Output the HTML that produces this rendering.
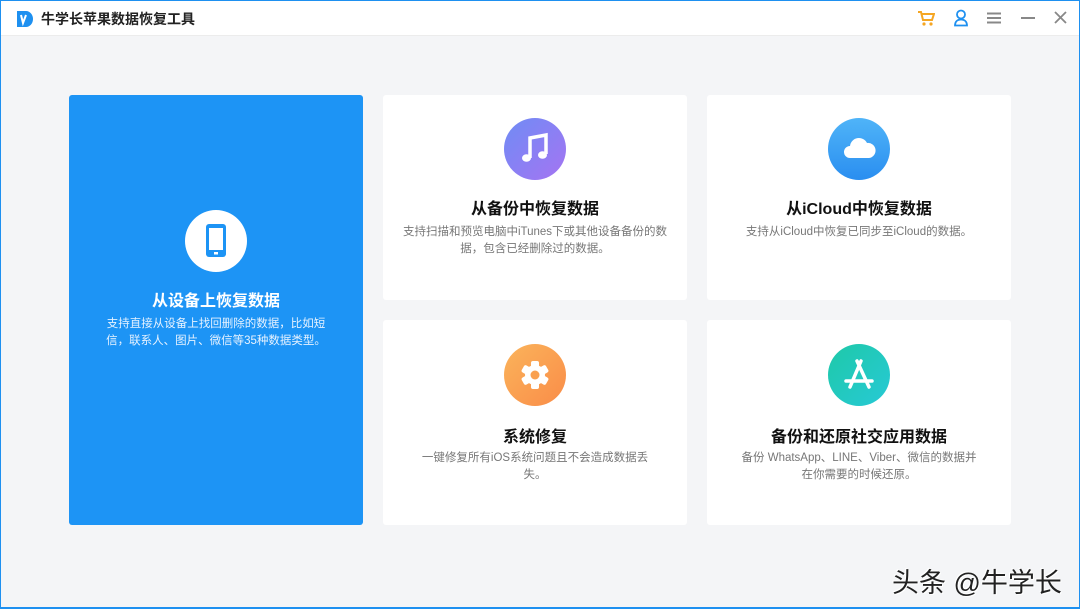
<!DOCTYPE html>
<html><head><meta charset="utf-8"><style>
*{margin:0;padding:0;box-sizing:border-box}
body{width:1080px;height:609px;overflow:hidden;font-family:"Liberation Sans","Noto Sans CJK SC",sans-serif;background:#f4f5f7;position:relative}
.frame{position:absolute;left:0;top:0;width:1080px;height:609px;border:1px solid #1e90f0;border-bottom-width:2px;pointer-events:none}
.top{position:absolute;left:0;top:0;width:1080px;height:36px;background:#fff;border-bottom:1px solid #ececec}
.title{position:absolute;left:41px;top:9px;font-size:14px;font-weight:bold;color:#222}
.card{position:absolute;background:#fff;border-radius:3px;text-align:center}
.circ{position:absolute;width:62px;height:62px;border-radius:50%;left:50%;margin-left:-31px}
.h{position:absolute;left:0;right:0;font-size:16px;font-weight:bold;color:#111}
.d{position:absolute;left:0;right:0;font-size:11.5px;color:#777;line-height:16.5px;padding:0 13px}
.blue{background:#1d94f5}
.blue .h{color:#fff}.blue .d{color:#e6f2ff}
</style></head><body>
<div class="top">
<svg style="position:absolute;left:16px;top:10px" width="17" height="18" viewBox="0 0 17 18"><path d="M1 1h9a7 8 0 0 1 0 16H1z" fill="#1e90f0"/><path d="M5 5l2 8 3-8" stroke="#fff" stroke-width="2" fill="none"/></svg>
<div class="title">牛学长苹果数据恢复工具</div>
<svg style="position:absolute;left:917px;top:10px" width="18" height="17" viewBox="0 0 18 17"><path d="M1 2h3l2 8h9l2-6H5" stroke="#f5a623" stroke-width="2" fill="none"/><circle cx="7" cy="14" r="1.6" fill="#f5a623"/><circle cx="14" cy="14" r="1.6" fill="#f5a623"/></svg>
<svg style="position:absolute;left:953px;top:9px" width="16" height="18" viewBox="0 0 16 18"><circle cx="8" cy="5.5" r="4" stroke="#1e90f0" stroke-width="1.8" fill="none"/><path d="M2 16.5c0-4 2.5-6 6-6s6 2 6 6z" stroke="#1e90f0" stroke-width="1.8" fill="none"/></svg>
<svg style="position:absolute;left:987px;top:12px" width="14" height="12"><path d="M0 1.5h14M0 6h14M0 10.5h14" stroke="#888" stroke-width="2"/></svg>
<svg style="position:absolute;left:1021px;top:17px" width="14" height="2"><path d="M0 1h14" stroke="#888" stroke-width="2"/></svg>
<svg style="position:absolute;left:1054px;top:11px" width="13" height="13"><path d="M1 1l11 11M12 1L1 12" stroke="#888" stroke-width="1.8"/></svg>
</div>

<div class="card blue" style="left:69px;top:95px;width:294px;height:430px">
<div class="circ" style="background:#fff;top:115px"><svg width="62" height="62" viewBox="0 0 62 62"><rect x="21" y="14" width="20" height="33" rx="3" fill="#1d94f5"/><rect x="24" y="18" width="14" height="22" fill="#fff"/><rect x="29" y="42" width="4" height="2.5" fill="#fff"/></svg></div>
<div class="h" style="top:192px">从设备上恢复数据</div>
<div class="d" style="top:221px;padding:0 30px">支持直接从设备上找回删除的数据，比如短信，联系人、图片、微信等35种数据类型。</div>
</div>

<div class="card" style="left:383px;top:95px;width:304px;height:205px">
<div class="circ" style="background:linear-gradient(135deg,#6f8cf5,#a574f2);top:23px"><svg width="62" height="62" viewBox="0 0 62 62"><path d="M26 40V20l16-3v19" stroke="#fff" stroke-width="3.5" fill="none"/><ellipse cx="22.5" cy="40" rx="4.5" ry="3.8" fill="#fff"/><ellipse cx="38.5" cy="37" rx="4.5" ry="3.8" fill="#fff"/></svg></div>
<div class="h" style="top:100px">从备份中恢复数据</div>
<div class="d" style="top:129px">支持扫描和预览电脑中iTunes下或其他设备备份的数据，包含已经删除过的数据。</div>
</div>

<div class="card" style="left:707px;top:95px;width:304px;height:205px">
<div class="circ" style="background:linear-gradient(180deg,#4fb4f8,#2a8ef0);top:23px"><svg width="62" height="62" viewBox="0 0 62 62"><path d="M22 40a6 6 0 0 1 0-12 9 9 0 0 1 17-3 7 7 0 0 1 2 15z" fill="#fff"/></svg></div>
<div class="h" style="top:100px">从iCloud中恢复数据</div>
<div class="d" style="top:129px">支持从iCloud中恢复已同步至iCloud的数据。</div>
</div>

<div class="card" style="left:383px;top:320px;width:304px;height:205px">
<div class="circ" style="background:linear-gradient(135deg,#fbb45b,#f98c48);top:24px"><svg width="62" height="62" viewBox="0 0 62 62"><g fill="#fff" transform="translate(31 31)"><rect x="-4" y="-14" width="8" height="28" rx="2"/><rect x="-4" y="-14" width="8" height="28" rx="2" transform="rotate(60)"/><rect x="-4" y="-14" width="8" height="28" rx="2" transform="rotate(120)"/><circle r="10"/></g><circle cx="31" cy="31" r="4.5" fill="#f9a050"/></svg></div>
<div class="h" style="top:103px">系统修复</div>
<div class="d" style="top:130px;padding:0 34px">一键修复所有iOS系统问题且不会造成数据丢失。</div>
</div>

<div class="card" style="left:707px;top:320px;width:304px;height:205px">
<div class="circ" style="background:linear-gradient(135deg,#1ec9a8,#27c9d6);top:24px"><svg width="62" height="62" viewBox="0 0 62 62"><path d="M33 17L22 43M29 17l12 26M18 37h26" stroke="#fff" stroke-width="3.5" stroke-linecap="round" fill="none"/></svg></div>
<div class="h" style="top:103px">备份和还原社交应用数据</div>
<div class="d" style="top:130px;padding:0 30px">备份 WhatsApp、LINE、Viber、微信的数据并在你需要的时候还原。</div>
</div>

<div style="position:absolute;left:892px;top:561px;font-size:27px;color:#222;text-shadow:1px 1px 0 #fff,-1px -1px 0 #fff">头条 @牛学长</div>
<div class="frame"></div>
</body></html>
